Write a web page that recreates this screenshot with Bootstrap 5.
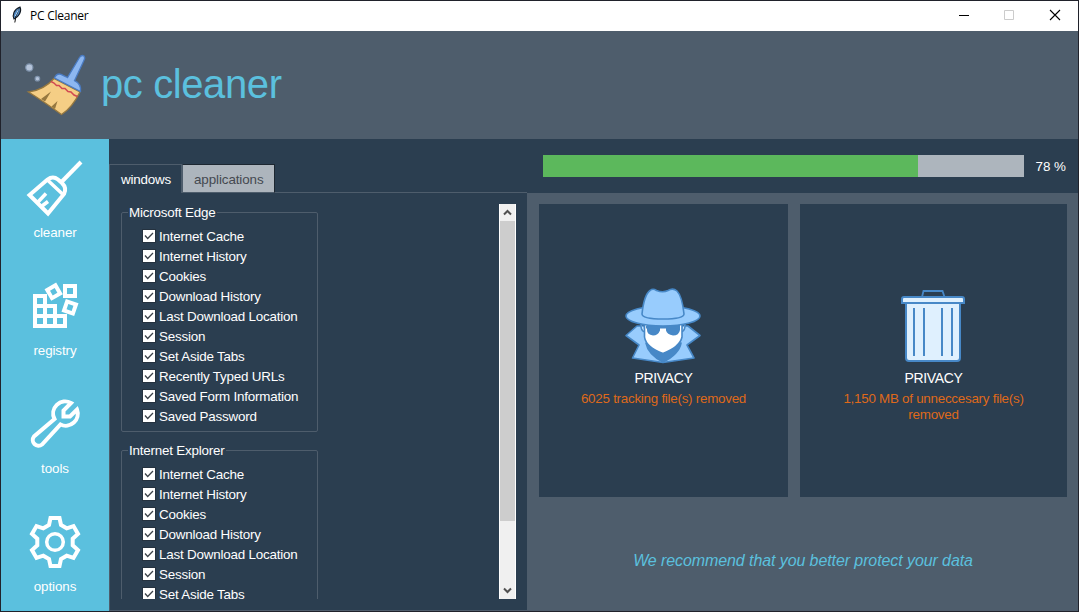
<!DOCTYPE html>
<html lang="en">
<head>
<meta charset="utf-8">
<title>PC Cleaner</title>
<link href="https://cdn.jsdelivr.net/npm/bootstrap@5.3.0/dist/css/bootstrap.min.css" rel="stylesheet">
<script src="https://cdn.jsdelivr.net/npm/bootstrap@5.3.0/dist/js/bootstrap.bundle.min.js"></script>
<style>
:root{--navy:#2b3e50;--slate:#4e5d6c;--sky:#5bc0de}
body{margin:0;height:612px;width:1079px;overflow:hidden;font:13.4px/20px "Liberation Sans",Arial,sans-serif;color:#fff;background:var(--navy)}
.app-window{height:612px;border:1px solid #20222b}
.titlebar{height:30px;background:#fff;color:#000;flex:none}
.titlebar .caption{font:12px/30px "Open Sans","Noto Sans",sans-serif;letter-spacing:-.25px}
.titlebar svg,.side svg,.brand svg,.tile svg,.scroller svg{display:block;flex:none}
.brand{height:108px;background:var(--slate);flex:none}
.brand h1{font-size:40px;line-height:44px;color:var(--sky);margin:31px 0 0 -1px;font-weight:400;letter-spacing:-.4px}
.side{width:108px;background:var(--sky);flex:none}
.side a{height:118px;color:#fff;text-decoration:none;text-align:center;display:block;letter-spacing:-.1px}
.ico{fill:none;stroke:#fff;stroke-width:4}
.options{width:418px;flex:none}
.tabs{height:54px;padding-top:25px;flex:none}
.tabs .tab{height:29px;line-height:30px;letter-spacing:-.2px}
.tabs .on{border:1px solid var(--slate);border-bottom:0;width:73px;padding-left:11px}
.tabs .off{height:29px;background:#adb5bd;color:#444950;border:1px solid #1d2731;border-left-color:var(--slate);border-bottom-color:var(--slate);width:93px;padding-left:11px;letter-spacing:-.1px}
.tab-rest{border-bottom:1px solid var(--slate)}
.pane{border-left:1px solid var(--slate);border-bottom:1px solid var(--slate);padding:11px 11px 11px 11px;height:418px}
.list-view{width:197px;height:395px;overflow:hidden}
.group{border:1px solid var(--slate);border-radius:2px;height:220px;margin:8px 0 18px;padding:14px 0 0 21px}
.group legend{position:relative;float:none;font-size:13.4px;line-height:16px;width:max-content;margin:-22px 0 6px -15px;padding:0 1px;background:var(--navy);letter-spacing:-.2px}
.opt{height:20px;display:flex;align-items:center;gap:4px;white-space:nowrap;letter-spacing:-.2px}
.opt i{width:12px;height:12px;background:#fff;box-shadow:0 0 0 1px #25323f;display:block;margin-top:-2px}
.opt i svg{display:block}
.scroller{width:17px;height:395px;background:#f0f0f0;border:solid #fff;border-width:0 1px}
.scroller .thumb{height:300px;background:#cdcdcd}
.status{height:54px;padding:16px 12px 0 16px}
.progress{--bs-progress-height:22px;--bs-progress-bg:#adb5bd;--bs-progress-border-radius:0;--bs-progress-bar-bg:#5cb85c;width:481px;border-radius:0}
.results{background:var(--slate);height:418px;padding:11px 11px 0 12px}
.tile{height:293px;background:var(--navy);text-align:center;padding-top:82px}
.tile p{margin:0;padding-top:3px;line-height:16px;color:#df691a;letter-spacing:-.26px}
.tile h2{font-size:14px;line-height:20px;margin:0;font-weight:400;letter-spacing:-.35px}
.advice{font-size:16px;font-style:italic;color:var(--sky);line-height:20px;margin-top:54px;text-align:center;letter-spacing:-.09px}
</style>
</head>
<body>
<div class="app-window d-flex flex-column">
  <header class="titlebar d-flex align-items-center">
    <svg width="29" height="30" viewBox="1 1 29 30"><path d="M14 19C12 15 14 9 20 7C22 11 19 17 14 19Z" fill="#4f86bf" stroke="#111820" stroke-width="1.1"/><path d="M14.8 22.5Q15.5 15 19 8.5" fill="none" stroke="#111" stroke-width="1"/><path d="M15.3 16L18.5 9.5" stroke="#a9d0f2" stroke-width="1"/></svg>
    <span class="caption">PC Cleaner</span>
    <svg class="ms-auto" width="138" height="30" viewBox="940 1 138 30" fill="none"><path d="M959 15.5H969" stroke="#000"/><path d="M1004.5 10.500H1013.500V19.500H1004.500Z" stroke="#ccc"/><path d="M1050 10L1060 20M1060 10L1050 20" stroke="#000" stroke-width="1.1"/></svg>
  </header>
  <section class="brand d-flex">
    <svg width="101" height="108" viewBox="1 31 101 108">
      <path d="M54 78.5Q44 90 28.5 92Q43 101 61.5 114.500Q72 108 80 92Z" fill="#f5ce85" stroke="#967840" stroke-width="1.400"/>
      <path d="M41 99L51 91.500L45 101.500ZM51.500 106.500L57.500 101L55 109Z" fill="#967840"/>
      <path d="M51 81.500L54 83L56.500 85.500L59 85.500L62 88.500L65 88.500L68 91.500L71 92L74 95L77.500 96.500" fill="none" stroke="#d14952" stroke-width="1.500"/>
      <path d="M54.500 78Q56.500 73 61 74.300Q65 76 67.500 77.500L79.500 57.500Q81.500 54.500 84 56Q85.300 57.500 84 60.200L74.500 80.700Q81.500 84 80.500 91.500Z" fill="#8db7f0" stroke="#4a7bc2" stroke-width="1.300"/>
      <circle cx="29.300" cy="67.500" r="3.600" fill="#b5c4da" stroke="#7e92ab" stroke-width="1.200"/><circle cx="37.400" cy="78.700" r="2.300" fill="#b5c4da" stroke="#7e92ab" stroke-width="1.100"/>
    </svg>
    <h1>pc cleaner</h1>
  </section>
  <div class="d-flex flex-fill">
    <nav class="side">
      <a href="#"><svg width="108" height="84" viewBox="1 139 108 84"><g class="ico"><path d="M81 162L61 182.500"/><path d="M29.500 195L48 213.500L64 194Q67 188 62 183L58 179.500Q53 175.500 47.500 179.500Z"/><path d="M48 180.500L63 194.500M38 202L46 193.500M42 206L48 201.500" stroke-width="3.500"/></g></svg>cleaner</a>
      <a href="#"><svg width="108" height="84" viewBox="1 257 108 84"><path fill="#fff" fill-rule="evenodd" d="M33 294H47V304H57V314H67V328H33ZM37 298V304H43V298ZM37 308V314H43V308ZM47 308V314H53V308ZM37 318V324H43V318ZM47 318V324H53V318ZM57 318V324H63V318Z"/><g class="ico"><path d="M65 286H75V296H65Z"/><rect x="-4.700" y="-4.700" width="9.400" height="9.400" transform="translate(53.700 291.700) rotate(-30)"/><rect x="-4.700" y="-4.700" width="9.400" height="9.400" transform="translate(70 307.500) rotate(19)"/></g></svg>registry</a>
      <a href="#"><svg width="108" height="84" viewBox="1 375 108 84"><path class="ico" d="M71 403L63.500 410.500V416.500H70L77 409.500A12 12 0 0 1 60.500 424.500L42 444.500A5.700 5.700 0 0 1 34 436.500L54.500 419A12 12 0 0 1 71 403Z"/></svg>tools</a>
      <a href="#"><svg width="108" height="84" viewBox="1 493 108 84"><g class="ico" transform="translate(55 542)"><path d="M-6-17L-4.500-24H4.500L6-17L11.700-13.700L18.500-15.900L23-8.100L17.700-3.300V3.300L23 8.100L18.500 15.900L11.700 13.700L6 17L4.500 24H-4.500L-6 17L-11.700 13.700L-18.500 15.900L-23 8.100L-17.700 3.300V-3.300L-23-8.100L-18.500-15.900L-11.700-13.700Z"/><circle r="8.300" stroke-width="3.500"/></g></svg>options</a>
    </nav>
    <main class="options">
      <div class="tabs d-flex"><div class="tab on">windows</div><div class="tab off">applications</div><div class="tab-rest flex-fill"></div></div>
      <div class="pane d-flex justify-content-between">
        <div class="list-view" id="list"></div>
        <div class="scroller"><svg width="15" height="17" viewBox="0 0 15 17"><path d="M4 10.500L7.500 7L11 10.500" fill="none" stroke="#505050" stroke-width="2"/></svg><div class="thumb"></div><svg width="15" height="78" viewBox="0 1 15 78"><path d="M4 68.500L7.500 72L11 68.500" fill="none" stroke="#505050" stroke-width="2"/></svg></div>
      </div>
    </main>
    <section class="flex-fill">
      <div class="status d-flex"><div class="progress"><div class="progress-bar" style="width:78%"></div></div><span class="ms-auto" style="line-height:23px">78 %</span></div>
      <div class="results">
        <div class="d-flex justify-content-between">
          <div class="tile" style="width:249px">
            <svg class="mx-auto" width="84" height="82" viewBox="622 286 84 82" stroke="#4788c7" stroke-width="1.600" stroke-linejoin="round">
              <path d="M637 326L626 335.500L639 345L632.500 358L663 362.500L694 358L687 345L700 335.500L688 326Z" fill="#98ccfd"/>
              <path d="M641 324Q640.500 331 645 332M685 324Q685.500 331 681 332" fill="#dff0fe"/>
              <path d="M646 343Q648 354 663 362Q679 354 681 343Z" fill="#4788c7"/>
              <path d="M644.500 323V337Q646 347 663 353.500Q680 347 682 337V323Z" fill="#fff"/>
              <path d="M647 325H660V330.500Q658 335.500 653 335.500Q647 334.500 647 330ZM666 325H680V330Q679 335.500 673 335.500Q667 334.500 666 330.500Z" fill="#4788c7" stroke="none"/><path d="M646 327H680" stroke-width="3"/>
              <ellipse cx="663" cy="316" rx="37" ry="10" fill="#98ccfd"/>
              <path d="M642 314Q644 295 650 290.500Q653 288 656.500 290.500Q663 293 668 290.500Q673 287.500 677 291Q682 296 684 314Q684 319 663 319Q642 319 642 314Z" fill="#98ccfd"/>
            </svg>
            <h2>PRIVACY</h2><p>6025 tracking file(s) removed</p>
          </div>
          <div class="tile" style="width:267px">
            <svg class="mx-auto" width="84" height="82" viewBox="892 286 84 82" fill="#dff0fe" stroke="#4788c7" stroke-width="2"><path d="M922 297L923.500 291H942.500L944.500 297" fill="none" stroke-width="1.800"/><path d="M906 302H960V358Q960 361 957 361H909Q906 361 906 358Z"/><path d="M902 303V299Q902 297 904 297H962Q964 297 964 299V303Z"/><path d="M914 308V356M924 308V356M942 308V356M952 308V356"/></svg>
            <h2>PRIVACY</h2><p class="mx-auto" style="width:200px">1,150 MB of unneccesary file(s) removed</p>
          </div>
        </div>
        <div class="advice">We recommend that you better protect your data</div>
      </div>
    </section>
  </div>
</div>
<script>
const items = ["Internet Cache","Internet History","Cookies","Download History","Last Download Location","Session","Set Aside Tabs","Recently Typed URLs","Saved Form Information","Saved Password"];
const groups = [["Microsoft Edge", items], ["Internet Explorer", items.slice(0, 7)]];
const check = '<i><svg width="12" height="12" viewBox="0 0 12 12"><path d="M2 5.500L4.700 8.500L10 3" fill="none" stroke="#3c434a" stroke-width="1.300"/></svg></i>';
document.getElementById("list").innerHTML = groups.map(([name, rows]) =>
  `<div class="group"><legend>${name}</legend>${rows.map(t => `<div class="opt">${check}<span>${t}</span></div>`).join("")}</div>`).join("");
</script>
</body>
</html>
